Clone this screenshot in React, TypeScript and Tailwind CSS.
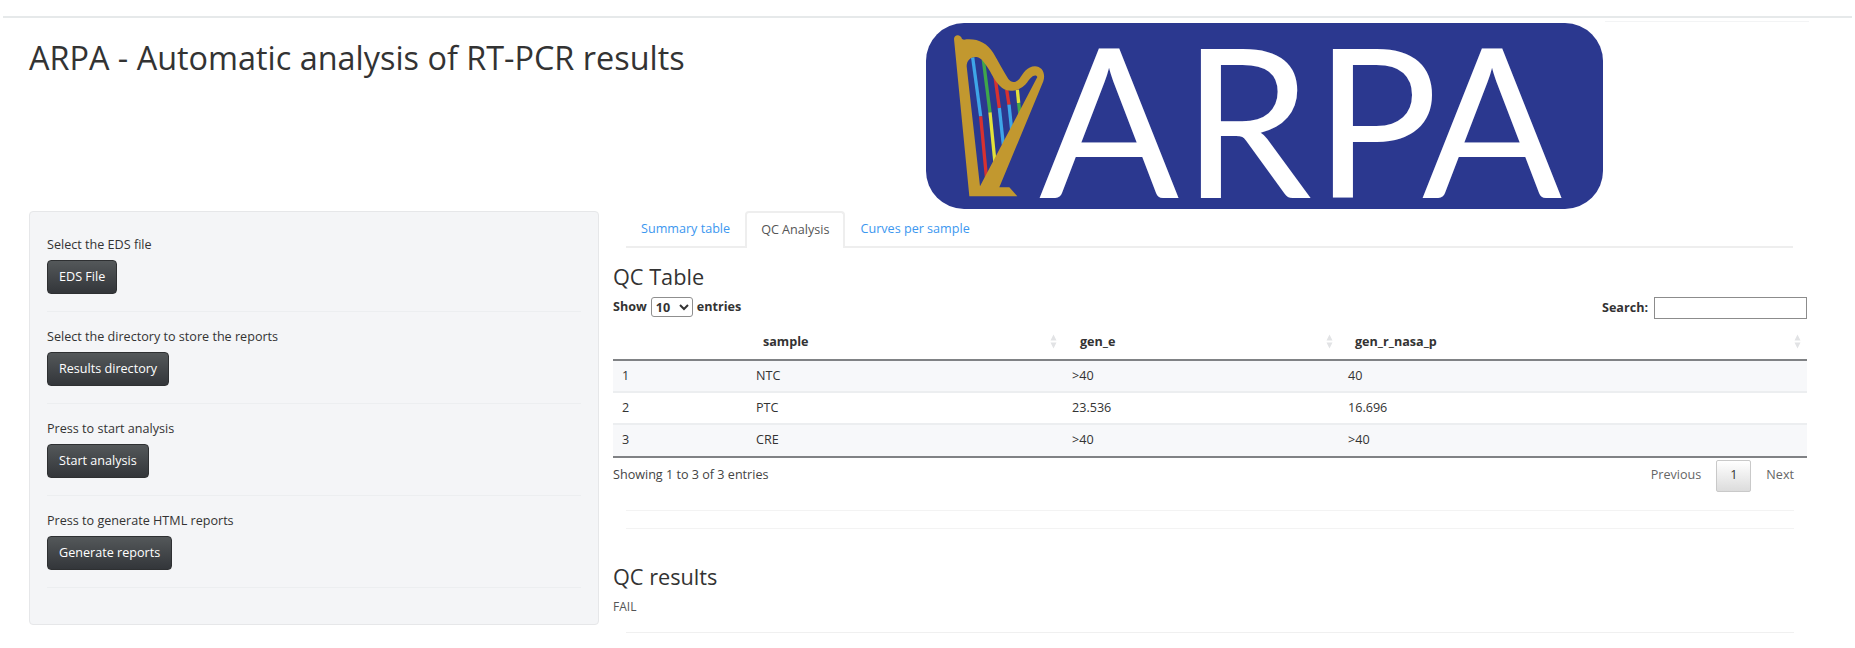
import React from 'react';

const font = { fontFamily: '"Open Sans", sans-serif' };

const steps = [
  { label: 'Select the EDS file', button: 'EDS File' },
  { label: 'Select the directory to store the reports', button: 'Results directory' },
  { label: 'Press to start analysis', button: 'Start analysis' },
  { label: 'Press to generate HTML reports', button: 'Generate reports' },
];

const rows = [
  ['1', 'NTC', '>40', '40'],
  ['2', 'PTC', '23.536', '16.696'],
  ['3', 'CRE', '>40', '>40'],
];

const SortIcon = () => (
  <svg width="7" height="15" viewBox="0 0 7 15" className="shrink-0">
    <path d="M3.5 0.5 L6.5 6.5 H0.5 Z" fill="#e2e3e5" />
    <path d="M3.5 14.5 L6.5 8.5 H0.5 Z" fill="#e2e3e5" />
  </svg>
);

const strings: [string, string][] = [
  ['#3ea5e8', 'M98 113 L122 290'],
  ['#d8312f', 'M122 290 L140 480'],
  ['#3fa64a', 'M130 120 L150 278'],
  ['#e3e13a', 'M150 278 L165 430'],
  ['#d8312f', 'M165 170 L178 265'],
  ['#3ea5e8', 'M178 265 L190 375'],
  ['#d8312f', 'M200 210 L207 255'],
  ['#3ea5e8', 'M207 255 L215 330'],
  ['#e3e13a', 'M232 210 L236 250'],
  ['#3fa64a', 'M236 250 L240 285'],
];

const letters = [
  { ch: 'A', x: 113 },
  { ch: 'R', x: 256 },
  { ch: 'P', x: 388 },
  { ch: 'A', x: 496 },
];

const Logo = () => (
  <svg width="677" height="186" viewBox="0 0 677 186" className="block shrink-0 overflow-visible">
    <rect x="0" y="0" width="677" height="186" rx="38" fill="#2b388f" />
    {/* harp, coordinates taken at 3x */}
    <g transform="translate(14 -3.3) scale(0.3333)">
      {strings.map(([color, d]) => (
        <path key={d} d={d} stroke={color} strokeWidth="10" fill="none" />
      ))}
      <path
        d="M42 58 C42 44 62 42 66 58 L72 60 C110 55 140 68 160 100 C175 125 190 155 205 178 C215 190 225 190 238 178 C250 160 262 140 285 140 C305 140 318 160 310 185 L178 503 L208 503 L232 530 L88 530 Z M80 140 C80 120 95 110 110 112 C125 115 135 130 150 155 C165 185 180 205 200 212 C225 218 250 205 262 188 C270 175 285 160 292 172 L120 500 Z"
        fill="#c2982f"
        fillRule="evenodd"
      />
    </g>
    {letters.map((l) => (
      <text key={l.x} x={l.x} y="175" fontFamily='Lato, sans-serif' fontSize="207" fill="#ffffff">
        {l.ch}
      </text>
    ))}
  </svg>
);

export default function App() {
  return (
    <div className="h-[648px] overflow-hidden bg-white text-[12.6px] text-[#333333]" style={font}>
      <div className="mx-[3px] mt-4 h-[2px] bg-[#e6e9ea]" />

      <div className="flex h-[193px] pl-[29px] pt-[5px]">
        <h1 className="mt-[12px] w-[897px] shrink-0 text-[32.4px] leading-[44px] font-normal text-[#333333]">
          ARPA - Automatic analysis of RT-PCR results
        </h1>
        <Logo />
        <div className="-mt-[2px] ml-[2px] h-[1px] w-[204px] bg-[#f3f4f5]" />
      </div>

      <div className="flex pl-[29px]">
        <aside className="h-[414px] w-[570px] shrink-0 rounded border border-[#e6e7e9] bg-[#f4f5f7] px-[17px] pt-[24px]">
          {steps.map((step) => (
            <div key={step.label} className="mb-[16px] h-[76px] border-b border-[#eceef0]">
              <p className="leading-[18px]">{step.label}</p>
              <button className="mt-[6px] h-[34px] rounded-[4px] border border-[#2e3032] bg-gradient-to-b from-[#54585a] to-[#33363a] px-[11px] text-white">
                {step.button}
              </button>
            </div>
          ))}
        </aside>

        <main className="ml-[14px] w-[1194px] shrink-0">
          <div className="ml-[13px] mr-[14px] flex h-[37px] border-b-2 border-[#eeeeee]">
            <a className="flex h-[35px] items-center px-[15px] pt-[1px] text-[#3c97ef]">Summary table</a>
            <a className="-mb-[2px] flex h-[37px] items-center rounded-t border-2 border-b-0 border-[#eeeeee] bg-white px-[14px] text-[#555555]">
              QC Analysis
            </a>
            <a className="flex h-[35px] items-center px-[15px] pt-[1px] text-[#3c97ef]">Curves per sample</a>
          </div>

          <h3 className="mt-[14px] text-[21.7px] leading-[30px] font-normal">QC Table</h3>

          <div className="mt-[5px] flex h-[22px] items-start justify-between">
            <label className="flex h-[20px] items-center gap-[4px] font-bold">
              Show
              <select className="h-[20px] w-[42px] rounded-[3px] border border-[#8f8f8f] bg-white font-bold" defaultValue="10" style={font}>
                <option value="10">10</option>
              </select>
              entries
            </label>
            <label className="flex items-center gap-[6px] font-bold">
              Search:
              <input className="h-[22px] w-[153px] border border-[#8c8c8c] bg-white" />
            </label>
          </div>

          <table className="mt-[11px] w-full table-fixed border-collapse">
            <thead>
              <tr className="h-[30px] border-b-2 border-[#808285]">
                <th className="w-[133px]" />
                <th className="w-[317px] pr-[6px] pb-[5px] pl-[17px]">
                  <div className="flex items-center justify-between">
                    <span>sample</span>
                    <SortIcon />
                  </div>
                </th>
                <th className="w-[276px] pr-[6px] pb-[5px] pl-[17px]">
                  <div className="flex items-center justify-between">
                    <span>gen_e</span>
                    <SortIcon />
                  </div>
                </th>
                <th className="pr-[6px] pb-[5px] pl-[16px]">
                  <div className="flex items-center justify-between">
                    <span>gen_r_nasa_p</span>
                    <SortIcon />
                  </div>
                </th>
              </tr>
            </thead>
            <tbody>
              {rows.map((row, i) => (
                <tr key={row[0]} className={`h-[32px] ${i < 2 ? 'border-b-2 border-[#eceef0]' : ''} ${i % 2 === 0 ? 'bg-[#f7f8fa]' : 'bg-white'}`}>
                  <td className="pl-[9px]">{row[0]}</td>
                  <td className="pl-[10px]">{row[1]}</td>
                  <td className="pl-[9px]">{row[2]}</td>
                  <td className="pl-[9px]">{row[3]}</td>
                </tr>
              ))}
            </tbody>
          </table>

          <div className="flex h-[37px] items-center justify-between border-t-2 border-[#808285] pr-[13px]">
            <span className="text-[#444444]">Showing 1 to 3 of 3 entries</span>
            <div className="flex items-center text-[#666666]">
              <span>Previous</span>
              <span className="mx-[15px] flex h-[32px] w-[35px] items-center justify-center rounded-[2px] border border-[#c9c9c9] bg-gradient-to-b from-white to-[#dcdcdc] text-[#333333]">
                1
              </span>
              <span>Next</span>
            </div>
          </div>

          <div className="mx-[13px] mt-[17px] h-[19px] border-y border-[#f3f3f3]" />

          <h3 className="mt-[33px] text-[21.7px] leading-[30px] font-normal">QC results</h3>
          <p className="mt-[6px] text-[12px] leading-[18px] text-[#555555]">FAIL</p>
          <div className="mx-[13px] mt-[16px] border-t border-[#f0f0f0]" />
        </main>
      </div>
    </div>
  );
}
